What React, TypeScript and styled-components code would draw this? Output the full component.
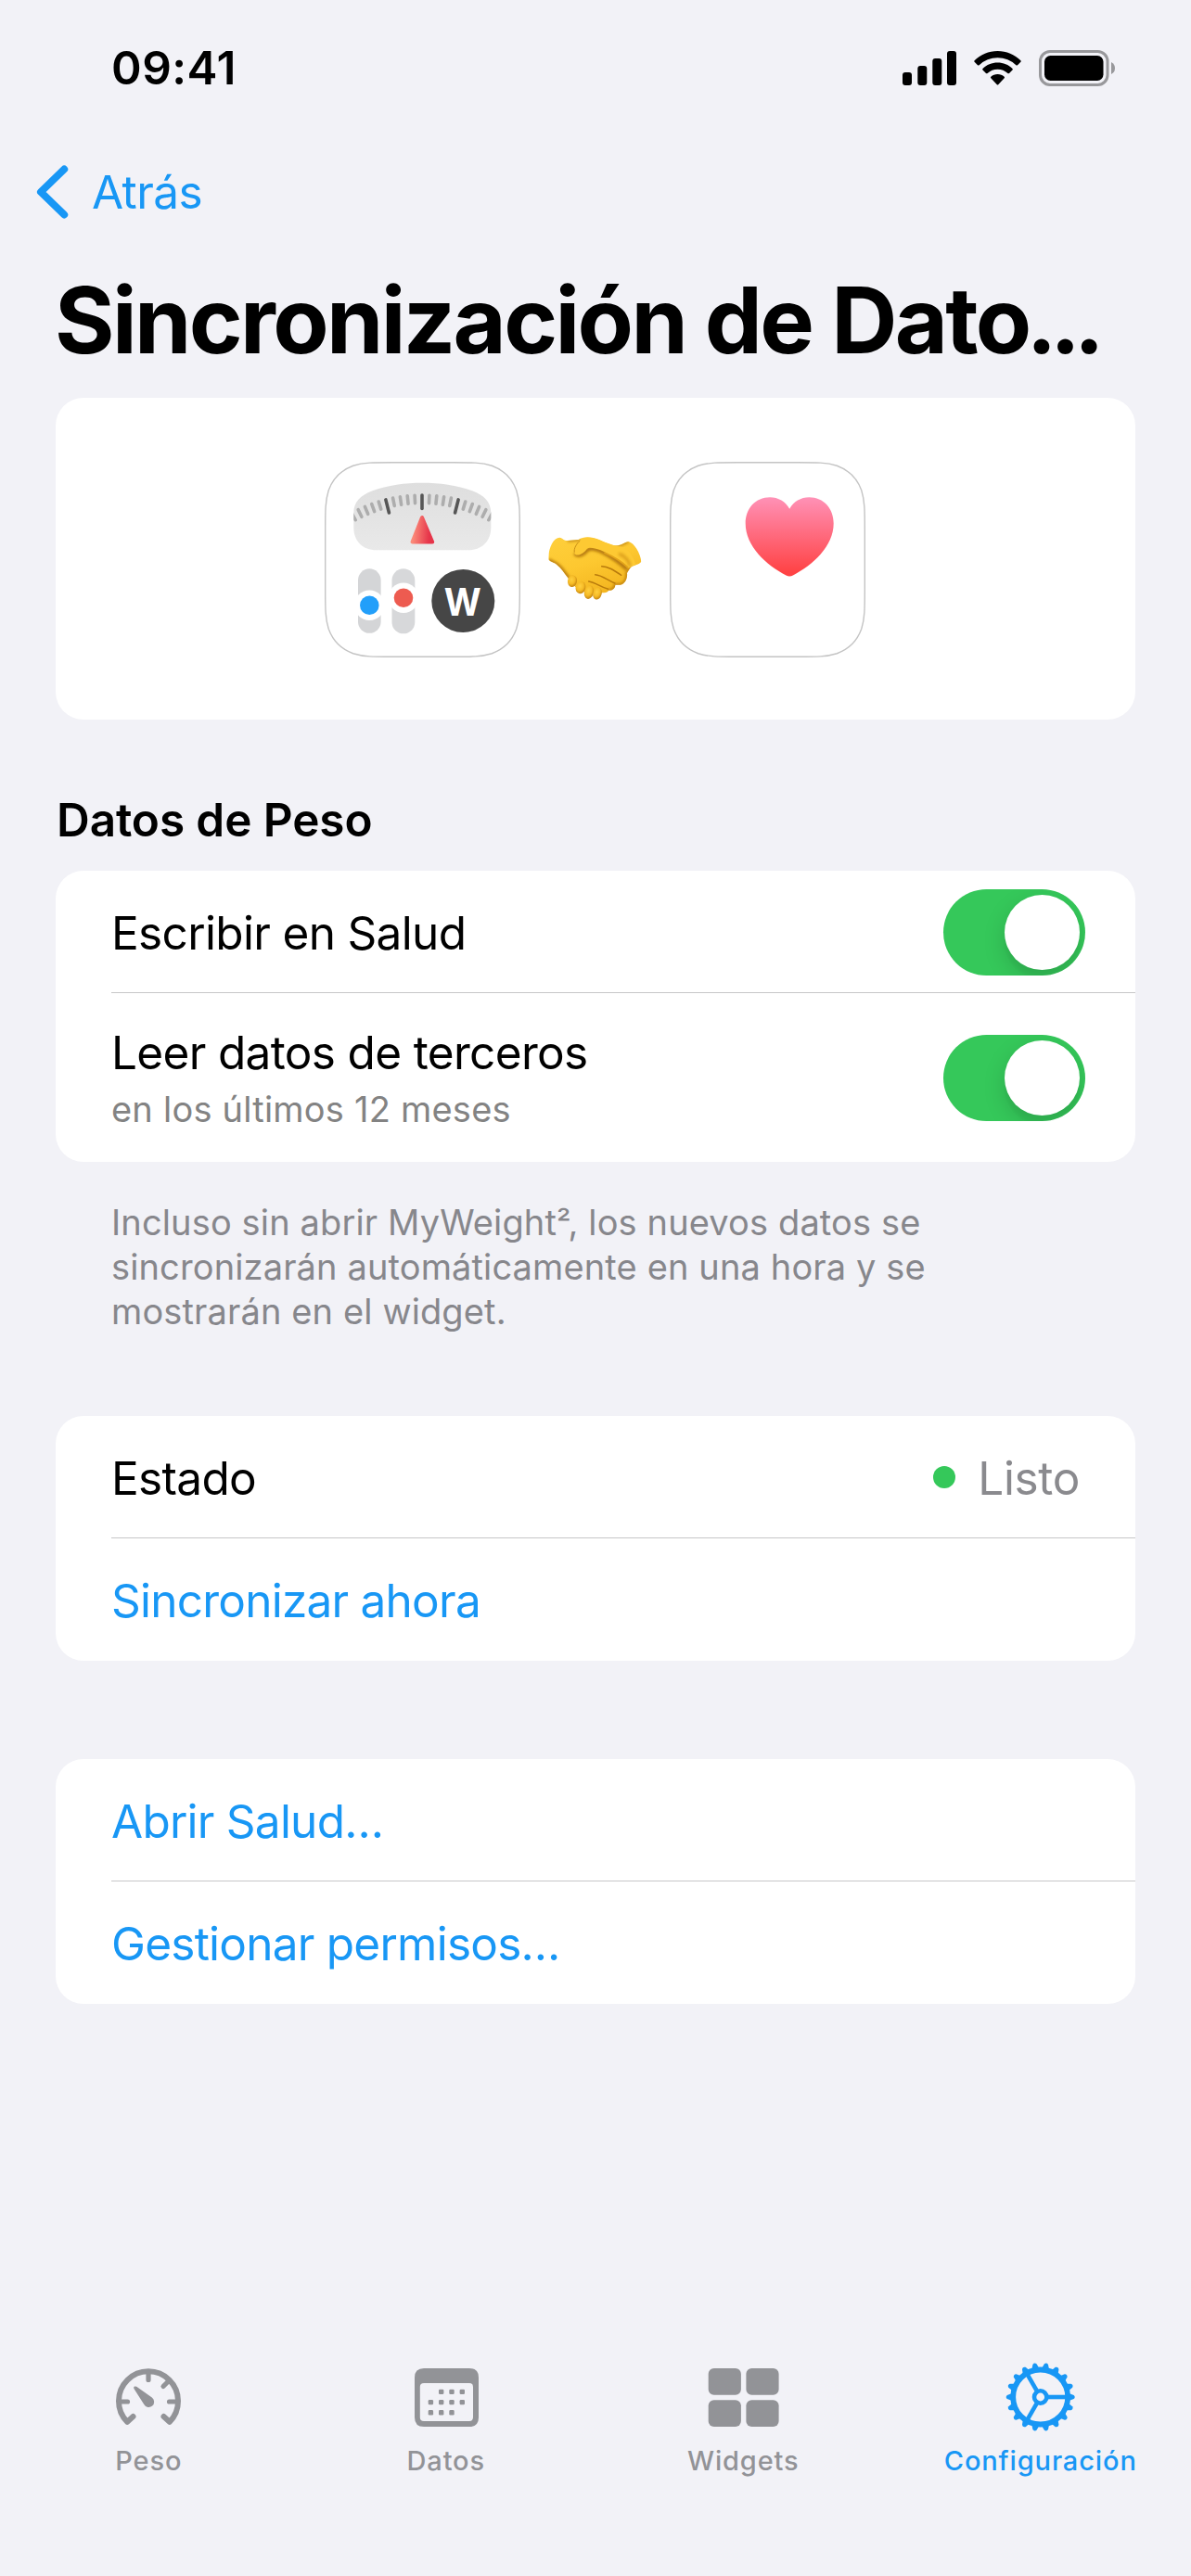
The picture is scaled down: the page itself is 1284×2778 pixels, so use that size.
import React from 'react';
import styled, { createGlobalStyle } from 'styled-components';

const BLUE = '#1897f5';
const GREEN = '#35c85a';
const GRAY = '#929397';

const GlobalStyle = createGlobalStyle`
    * {
        box-sizing: border-box;
    }
    body {
        margin: 0;
        background: #f2f2f7;
        font-family: Inter, "Liberation Sans", sans-serif;
        color: #000;
    }
    svg {
        display: block;
        flex: none;
    }
`;

const Screen = styled.div`
    display: flex;
    flex-direction: column;
    width: 1284px;
    height: 2778px;
    overflow: hidden;
`;

const StatusBar = styled.div`
    display: flex;
    align-items: center;
    justify-content: space-between;
    height: 146px;
    padding: 0 82px 0 120px;
`;

const Clock = styled.div`
    font-size: 49.5px;
    font-weight: 600;
    letter-spacing: 0.5px;
`;

const StatusIcons = styled.div`
    display: flex;
    align-items: center;
    gap: 19px;
`;

const NavBar = styled.div`
    display: flex;
    align-items: center;
    height: 122px;
    padding-left: 39px;
`;

const BackButton = styled.div`
    display: flex;
    align-items: center;
    gap: 25px;
    font-size: 49.5px;
    letter-spacing: -0.6px;
    color: ${BLUE};
`;

const Title = styled.h1`
    margin: 17px 0 24px 59px;
    font-size: 98.6px;
    font-weight: 700;
    line-height: 120px;
    letter-spacing: -2.65px;
    white-space: nowrap;
`;

const Ellipsis = styled.span`
    margin-left: -3px;
    letter-spacing: -7.4px;
`;

const Card = styled.div`
    margin: 0 60px;
    border-radius: 30px;
    background: #fff;
    overflow: hidden;
`;

const HeroCard = styled(Card)`
    display: flex;
    align-items: center;
    justify-content: center;
    height: 347px;
    gap: 30px;
    padding: 1px 2px 0 0;
`;

const HandshakeSlot = styled.div`
    padding-top: 20px;
`;

const SectionTitle = styled.h2`
    margin: 78px 0 24px 61px;
    font-size: 49.5px;
    font-weight: 600;
    line-height: 61px;
    letter-spacing: -0.1px;
`;

const Row = styled.div<{ $tall?: boolean }>`
    display: flex;
    align-items: center;
    justify-content: space-between;
    height: ${(props) => (props.$tall ? 182 : 132)}px;
    padding: 1px 54px 0 60px;
`;

const Separator = styled.div`
    height: 1px;
    margin: -1px 0 0 60px;
    background: #c6c6c8;
`;

const Texts = styled.div`
    display: flex;
    flex-direction: column;
    gap: 7px;
    padding-bottom: 4px;
`;

const Label = styled.div<{ $link?: boolean }>`
    padding-top: 2px;
    font-size: 49.5px;
    line-height: 61px;
    letter-spacing: ${(props) => (props.$link ? -0.76 : -0.66)}px;
    color: ${(props) => (props.$link ? BLUE : '#000')};
`;

const SubLabel = styled.div`
    font-size: 38px;
    line-height: 46px;
    letter-spacing: 0.22px;
    color: #838383;
`;

const Footnote = styled.p`
    margin: 41px 120px 89px;
    font-size: 38px;
    line-height: 48px;
    letter-spacing: 0.13px;
    color: #87878c;
`;

const Squared = styled.span`
    font-size: 35px;
    line-height: 1;
    letter-spacing: -3px;
`;

const Status = styled.div`
    display: flex;
    align-items: center;
    gap: 24px;
    padding: 2px 6px 0 0;
    font-size: 49.5px;
    line-height: 61px;
    letter-spacing: -0.35px;
    color: #8a8a8e;
`;

const Dot = styled.span`
    width: 24px;
    height: 24px;
    margin-bottom: 3px;
    border-radius: 50%;
    background: ${GREEN};
`;

const Switch = styled.div`
    display: flex;
    justify-content: flex-end;
    width: 153px;
    height: 93px;
    padding: 6px;
    border-radius: 47px;
    background: ${GREEN};
    overflow: hidden;
`;

const Knob = styled.div`
    width: 81px;
    height: 81px;
    border-radius: 50%;
    background: #fff;
    box-shadow: 0 9px 24px rgba(0, 0, 0, 0.15), 0 9px 3px rgba(0, 0, 0, 0.03);
`;

const LastCard = styled(Card)`
    margin-top: 106px;
`;

const TabBar = styled.div`
    display: flex;
    height: 231px;
    margin-top: auto;
    padding-right: 2px;
`;

const Tab = styled.div<{ $active?: boolean }>`
    display: flex;
    flex: 1 1 0;
    flex-direction: column;
    align-items: center;
    gap: 12px;
    color: ${(props) => (props.$active ? BLUE : GRAY)};
`;

const TabLabel = styled.div`
    font-size: 29px;
    font-weight: 500;
    line-height: 37px;
    letter-spacing: 0.87px;
`;

function SignalIcon() {
  return (
    <svg width="58" height="39" viewBox="0 0 58 39">
      <rect x="0" y="24" width="10" height="14" rx="3" />
      <rect x="16.3" y="17" width="10" height="21" rx="3" />
      <rect x="32.3" y="9" width="10" height="29" rx="3" />
      <rect x="48" y="1" width="10" height="37" rx="3" />
    </svg>
  );
}

function WifiIcon() {
  return (
    <svg width="51" height="39" viewBox="0 0 51 39">
      <path d="M25.5 1C35 1 43.9 4.8 50.4 11.2Q51.1 12 50.4 12.8L47 16.2Q46.2 17 45.4 16.2A28.6 28.6 0 0 0 5.6 16.2Q4.8 17 4 16.2L0.6 12.8Q-0.1 12 0.6 11.2C7.1 4.8 16 1 25.5 1Z" />
      <path d="M25.5 13.5C31.7 13.5 37.3 15.9 41.5 19.9Q42.3 20.7 41.5 21.5L38 25Q37.2 25.7 36.4 25A16 16 0 0 0 14.6 25Q13.8 25.7 13 25L9.5 21.5Q8.7 20.7 9.5 19.9C13.7 15.9 19.3 13.5 25.5 13.5Z" />
      <path d="M25.5 26C28.3 26 30.8 27 32.7 28.7Q33.5 29.5 32.7 30.3L26.2 37.2Q25.5 38 24.8 37.2L18.3 30.3Q17.5 29.5 18.3 28.7C20.2 27 22.7 26 25.5 26Z" />
    </svg>
  );
}

function BatteryIcon() {
  return (
    <svg width="82" height="39" viewBox="0 0 82 39">
      <rect x="1.5" y="1.5" width="72.5" height="36" rx="10.5" fill="none" stroke="#98989b" strokeWidth="3" />
      <rect x="6" y="6" width="63.5" height="27" rx="6.5" />
      <path d="M78 13Q82 15 82 19.5T78 26Z" fill="#98989b" />
    </svg>
  );
}

function ChevronIcon() {
  return (
    <svg width="35" height="60" viewBox="0 0 35 60">
      <path d="M30.2 5.5L5 30L30.2 54.5" fill="none" stroke={BLUE} strokeWidth="8" strokeLinecap="round" strokeLinejoin="round" />
    </svg>
  );
}

// iOS continuous corner, drawn once and rotated round the four corners
const ICON_SIZE = 211;
const ICON_RADIUS = 47.5;
const cornerPoints = [
  [0, 1.5287], [0, 1.0885], [0, 0.8684], [0.0749, 0.6315],
  [0.1691, 0.3728], [0.3728, 0.1691], [0.6315, 0.0749],
  [0.8684, 0], [1.0885, 0], [1.5287, 0],
].map(([x, y]) => [x * ICON_RADIUS + 0.7, y * ICON_RADIUS + 0.7]);

const squirclePath = () => {
  const parts: string[] = [];
  for (let corner = 0; corner < 4; corner += 1) {
    const pts = cornerPoints.map(([px, py]) => {
      let x = px;
      let y = py;
      for (let turn = 0; turn < corner; turn += 1) {
        [x, y] = [ICON_SIZE - y, x];
      }
      return `${x.toFixed(2)} ${y.toFixed(2)}`;
    });
    parts.push(`${corner === 0 ? 'M' : 'L'}${pts[0]}C${pts.slice(1).join(' ')}`);
  }
  return `${parts.join('')}Z`;
};

const SQUIRCLE = squirclePath();

const scaleTicks = Array.from({ length: 21 }, (_, i) => i - 10);

function WeightAppIcon() {
  return (
    <svg width="211" height="211" viewBox="0 0 211 211">
      <defs>
        <linearGradient id="dial" x1="0" y1="0" x2="0" y2="1">
          <stop offset="0" stopColor="#dedede" />
          <stop offset="1" stopColor="#e9e9e9" />
        </linearGradient>
        <linearGradient id="needle" x1="0" y1="0" x2="1" y2="0.1">
          <stop offset="0.1" stopColor="#fb8a79" />
          <stop offset="0.9" stopColor="#e6354a" />
        </linearGradient>
        <clipPath id="dialClip">
          <path d="M31.3 55C31.3 43 39 36 51 31.5C68 25 87 22.7 105.3 22.7S142.6 25 159.6 31.5C171.6 36 179.3 43 179.3 55V71C179.3 86 169 95.3 155 95.3H55.6C41.6 95.3 31.3 86 31.3 71Z" />
        </clipPath>
      </defs>
      <path d={SQUIRCLE} fill="#fff" stroke="#c4c4c4" strokeWidth="1.4" />
      <g clipPath="url(#dialClip)">
        <rect x="31" y="22" width="149" height="74" fill="url(#dial)" />
        {scaleTicks.map((i) => (
          <line
            key={i}
            x1="105"
            x2="105"
            y1="36"
            y2={i % 5 === 0 && Math.abs(i) < 10 ? 50.5 : 44.5}
            stroke={i % 5 === 0 && Math.abs(i) < 10 ? '#565656' : '#adadad'}
            strokeWidth="3.6"
            strokeLinecap="round"
            transform={`rotate(${i * 2.85} 105 195)`}
          />
        ))}
      </g>
      <path d="M105 60L94.5 86.5H116.2Z" fill="url(#needle)" stroke="url(#needle)" strokeWidth="4" strokeLinejoin="round" />
      <rect x="36" y="115.3" width="24.6" height="69.5" rx="12.3" fill="#d4d5d7" />
      <rect x="72.5" y="115.3" width="24.8" height="70" rx="12.4" fill="#d7d8da" />
      <circle cx="48.3" cy="154.7" r="16.3" fill="#fff" />
      <circle cx="48.3" cy="154.7" r="10.3" fill="#229ffa" />
      <circle cx="85" cy="146.7" r="16.3" fill="#fff" />
      <circle cx="85" cy="146.7" r="10.3" fill="#ed5b50" />
      <circle cx="149.3" cy="150" r="34" fill="#464646" />
      <text x="148.8" y="166.3" fill="#fff" fontSize="41" fontWeight="700" textAnchor="middle" textLength="40" lengthAdjust="spacingAndGlyphs">W</text>
    </svg>
  );
}

function HandshakeIcon() {
  return (
    <svg width="101" height="68" viewBox="62 297 303 204">
      <defs>
        <linearGradient id="skin" x1="0" y1="0" x2="0.5" y2="1">
          <stop offset="0" stopColor="#fecf3c" />
          <stop offset="0.5" stopColor="#fdc830" />
          <stop offset="1" stopColor="#f2b31e" />
        </linearGradient>
        <radialGradient id="finger" cx="0.4" cy="0.4" r="0.6">
          <stop offset="0" stopColor="#ffd040" />
          <stop offset="0.6" stopColor="#f6bb26" />
          <stop offset="1" stopColor="#c98912" />
        </radialGradient>
        <filter id="soft" x="-20%" y="-20%" width="140%" height="140%">
          <feGaussianBlur stdDeviation="4" />
        </filter>
        <clipPath id="hands">
          <path d="M63 362C64 330 80 299 99 299C109 301 112 309 125 309L160 306C172 297 190 296 208 300C238 308 258 323 283 325C298 325 309 315 321 312C340 316 360 348 363 377C357 387 338 388 331 394C325 400 321 407 317 414C319 430 312 445 302 450C294 454 286 452 279 452C278 464 270 470 258 470C252 477 245 478 237 478C180 485 152 470 125 428C113 413 104 398 90 387C82 380 66 377 63 370Z" />
        </clipPath>
      </defs>
      <g clipPath="url(#hands)">
        <rect x="62" y="297" width="303" height="204" fill="url(#skin)" />
        <path d="M63 372C82 380 92 385 104 400L128 432" fill="none" stroke="#b97b0d" strokeWidth="12" filter="url(#soft)" />
        <path d="M283 325C298 325 309 315 321 312M125 309L164 306" fill="none" stroke="#c58a12" strokeWidth="9" filter="url(#soft)" />
        <path d="M331 394C325 400 321 407 317 414C319 430 312 445 302 450C294 454 286 452 279 452C278 464 270 470 258 470" fill="none" stroke="#b97b0d" strokeWidth="9" filter="url(#soft)" />
        <path d="M148 350C160 364 178 352 188 340C200 330 222 338 240 347C265 360 292 378 318 402" fill="none" stroke="#b0730a" strokeWidth="12" filter="url(#soft)" />
        <path d="M320 398C295 372 262 354 232 340C210 332 194 329 187 336C178 349 160 361 149 353C141 343 150 321 166 308C180 295 202 297 226 306C252 316 268 325 290 328C306 329 330 340 345 386Z" fill="#fdc933" />
        <path d="M320 396C300 377 272 360 243 348" fill="none" stroke="#e2a31a" strokeWidth="5" />
        <path d="M290 352C307 355 325 375 326 392" fill="none" stroke="#dda01a" strokeWidth="10" filter="url(#soft)" />
      </g>
      <path d="M147 347C144 334 154 319 165 309" fill="none" stroke="#c98f17" strokeWidth="3" />
      <path d="M235 392C256 392 276 406 298 421M214 419C235 420 254 437 278 447M193 441C214 444 230 459 256 466" fill="none" stroke="#b87a0c" strokeWidth="4.5" strokeLinecap="round" />
      <ellipse cx="140" cy="440" rx="15" ry="19" fill="url(#finger)" transform="rotate(10 140 440)" />
      <ellipse cx="167" cy="461" rx="16" ry="20" fill="url(#finger)" transform="rotate(15 167 461)" />
      <ellipse cx="194" cy="476" rx="15" ry="22" fill="url(#finger)" transform="rotate(15 194 476)" />
      <ellipse cx="221" cy="480" rx="14" ry="20" fill="url(#finger)" transform="rotate(15 221 480)" />
    </svg>
  );
}

function HealthAppIcon() {
  return (
    <svg width="211" height="211" viewBox="0 0 211 211">
      <defs>
        <linearGradient id="heart" x1="0" y1="0" x2="0" y2="1">
          <stop offset="0" stopColor="#ff91b6" />
          <stop offset="0.95" stopColor="#ff4345" />
        </linearGradient>
      </defs>
      <path d={SQUIRCLE} fill="#fff" stroke="#c4c4c4" strokeWidth="1.4" />
      <path d="M129.2 50.7C125 43 117 38.3 108 38.3C92.5 38.3 81.7 50.5 81.7 66.5C81.7 91 104 111 125.5 122.6Q129.2 124.6 132.9 122.6C154.4 111 176.7 91 176.7 66.5C176.7 50.5 165.9 38.3 150.4 38.3C141.4 38.3 133.4 43 129.2 50.7Z" fill="url(#heart)" />
    </svg>
  );
}

function GaugeIcon() {
  return (
    <svg width="100" height="76" viewBox="0 0 100 76">
      <g fill="none" stroke="currentColor" strokeLinecap="round" strokeLinejoin="round">
        <path strokeWidth="6" d="M33.5 59L27.2 64.8A32 32 0 1 1 72.8 64.8L66.5 59" />
        <path strokeWidth="5.2" d="M19 43H27.5M81 43H72.5M50 12V19.5M71.5 21L66 26.5" />
      </g>
      <path fill="currentColor" d="M36.2 27.2Q34.9 29 34.6 29.3L45.3 46A5.8 5.8 0 1 0 53.8 38.5L37.2 26.7Q34.5 25.8 34.2 27.5Q34 28.5 34.6 29.3Z" />
    </svg>
  );
}

const calendarDots: [number, number][] = [
  [1, 0], [2, 0], [3, 0],
  [0, 1], [1, 1], [2, 1], [3, 1],
  [0, 2], [1, 2], [2, 2],
];

function CalendarIcon() {
  return (
    <svg width="100" height="76" viewBox="0 0 100 76" fill="currentColor">
      <path
        fillRule="evenodd"
        d="M26 7H75Q85 7 85 17V60Q85 70 75 70H26Q16 70 16 60V17Q16 7 26 7ZM26 23Q21.8 23 21.8 27V60Q21.8 64 26 64H75Q79 64 79 60V27Q79 23 75 23Z"
      />
      {calendarDots.map(([col, row]) => (
        <rect key={`${col}-${row}`} x={30.7 + col * 11.3} y={29.7 + row * 11.2} width="5.4" height="5.4" rx="1.3" />
      ))}
    </svg>
  );
}

function WidgetsIcon() {
  return (
    <svg width="100" height="76" viewBox="0 0 100 76" fill="currentColor">
      <rect x="12.7" y="7" width="35.2" height="28.8" rx="6" />
      <rect x="53.4" y="7" width="35.2" height="28.8" rx="6" />
      <rect x="12.7" y="41.2" width="35.2" height="28.8" rx="6" />
      <rect x="53.4" y="41.2" width="35.2" height="28.8" rx="6" />
    </svg>
  );
}

const gearTeeth = Array.from({ length: 18 }, (_, i) => i * 20);

function GearIcon() {
  return (
    <svg width="100" height="76" viewBox="0 0 100 76">
      <g fill="none" stroke="currentColor">
        <circle cx="49.7" cy="38" r="29.5" strokeWidth="5.8" />
        <circle cx="49.7" cy="38" r="6.7" strokeWidth="4.6" />
        {[0, 120, 240].map((angle) => (
          <path key={angle} d="M58 38H77" strokeWidth="4.6" transform={`rotate(${angle} 49.7 38)`} />
        ))}
      </g>
      {gearTeeth.map((angle) => (
        <path
          key={angle}
          d="M80.5 34L85.6 35.9Q87.8 38 85.6 40.1L80.5 42Z"
          fill="currentColor"
          transform={`rotate(${angle} 49.7 38)`}
        />
      ))}
    </svg>
  );
}

const tabs = [
  { name: 'Peso', icon: <GaugeIcon /> },
  { name: 'Datos', icon: <CalendarIcon /> },
  { name: 'Widgets', icon: <WidgetsIcon /> },
  { name: 'Configuración', icon: <GearIcon />, active: true },
];

function App() {
  return (
    <Screen>
      <GlobalStyle />
      <StatusBar>
        <Clock>09:41</Clock>
        <StatusIcons>
          <SignalIcon />
          <WifiIcon />
          <BatteryIcon />
        </StatusIcons>
      </StatusBar>
      <NavBar>
        <BackButton>
          <ChevronIcon />
          Atrás
        </BackButton>
      </NavBar>
      <Title>
        Sincronización de Dato
        <Ellipsis>...</Ellipsis>
      </Title>

      <HeroCard>
        <WeightAppIcon />
        <HandshakeSlot>
          <HandshakeIcon />
        </HandshakeSlot>
        <HealthAppIcon />
      </HeroCard>

      <SectionTitle>Datos de Peso</SectionTitle>
      <Card>
        <Row>
          <Label>Escribir en Salud</Label>
          <Switch>
            <Knob />
          </Switch>
        </Row>
        <Separator />
        <Row $tall>
          <Texts>
            <Label>Leer datos de terceros</Label>
            <SubLabel>en los últimos 12 meses</SubLabel>
          </Texts>
          <Switch>
            <Knob />
          </Switch>
        </Row>
      </Card>
      <Footnote>
        Incluso sin abrir MyWeight
        <Squared>²</Squared>
        , los nuevos datos se sincronizarán automáticamente en una hora y se mostrarán en el widget.
      </Footnote>

      <Card>
        <Row>
          <Label>Estado</Label>
          <Status>
            <Dot />
            Listo
          </Status>
        </Row>
        <Separator />
        <Row>
          <Label $link>Sincronizar ahora</Label>
        </Row>
      </Card>

      <LastCard>
        <Row>
          <Label $link>Abrir Salud…</Label>
        </Row>
        <Separator />
        <Row>
          <Label $link>Gestionar permisos…</Label>
        </Row>
      </LastCard>

      <TabBar>
        {tabs.map((tab) => (
          <Tab key={tab.name} $active={tab.active}>
            {tab.icon}
            <TabLabel>{tab.name}</TabLabel>
          </Tab>
        ))}
      </TabBar>
    </Screen>
  );
}

export default App;
